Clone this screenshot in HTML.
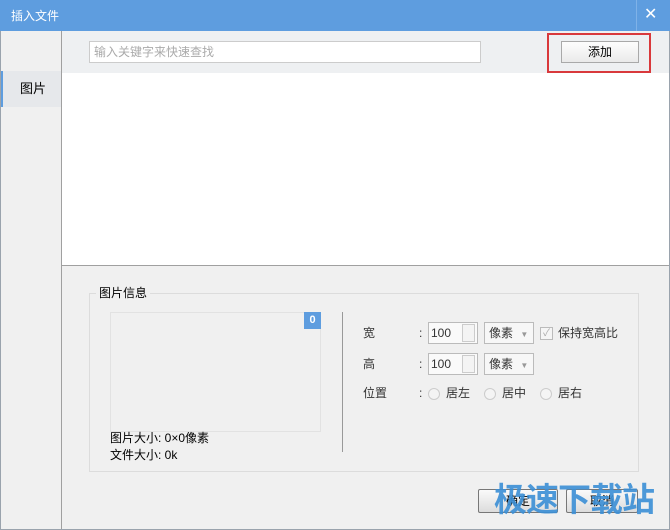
<!DOCTYPE html>
<html><head><meta charset="utf-8"><style>
*{margin:0;padding:0;box-sizing:border-box}
html,body{width:670px;height:530px;overflow:hidden}
body{background:#f0f0f0;font-family:"Liberation Sans","Noto Sans CJK SC","WenQuanYi Zen Hei",sans-serif;font-size:12px;line-height:14px;color:#333;position:relative}
.a{position:absolute;white-space:nowrap}
</style></head><body>
<div class="a" style="left:0;top:0;width:670px;height:31px;background:#5e9ddf"></div>
<div class="a" style="left:11px;top:9px;color:#fff;font-size:12px">插入文件</div>
<div class="a" style="left:636px;top:0;width:1px;height:31px;background:#7fb2e8"></div>
<div class="a" style="left:644px;top:7px;color:#fff;font-size:16px;line-height:16px">✕</div>
<div class="a" style="left:0;top:31px;width:670px;height:499px;border:1px solid #9aa3ad;border-top:0"></div>
<div class="a" style="left:1px;top:31px;width:60px;height:498px;background:#f0f0f0"></div>
<div class="a" style="left:61px;top:31px;width:1px;height:498px;background:#a0a0a0"></div>
<div class="a" style="left:1px;top:71px;width:60px;height:36px;background:#e6e8eb;border-left:2px solid #5e9ddf"></div>
<div class="a" style="left:20px;top:82px;font-size:13px;color:#000">图片</div>
<div class="a" style="left:62px;top:31px;width:607px;height:42px;background:#eef0f2"></div>
<div class="a" style="left:89px;top:41px;width:392px;height:22px;background:#fff;border:1px solid #ccc;color:#aaa;padding:3px 4px;font-size:12px">输入关键字来快速查找</div>
<div class="a" style="left:547px;top:33px;width:104px;height:40px;border:2px solid #d9393c"></div>
<div class="a" style="left:561px;top:41px;width:78px;height:22px;background:linear-gradient(#fdfdfd,#eaeaea);border:1px solid #a9a9a9;text-align:center;line-height:20px;color:#000">添加</div>
<div class="a" style="left:62px;top:73px;width:607px;height:193px;background:#fff;border-bottom:1px solid #a0a0a0"></div>
<div class="a" style="left:89px;top:293px;width:550px;height:179px;border:1px solid #dcdcdc"></div>
<div class="a" style="left:96px;top:286px;padding:0 3px;background:#f0f0f0;color:#000">图片信息</div>
<div class="a" style="left:110px;top:312px;width:211px;height:120px;border:1px solid #e2e2e2"></div>
<div class="a" style="left:304px;top:312px;width:17px;height:17px;background:#5e9ddf;color:#fff;font-weight:bold;text-align:center;line-height:17px;font-size:11px">0</div>
<div class="a" style="left:110px;top:431px;color:#000">图片大小: 0×0像素</div>
<div class="a" style="left:110px;top:448px;color:#000">文件大小: 0k</div>
<div class="a" style="left:342px;top:312px;width:1px;height:140px;background:#999"></div>
<div class="a" style="left:363px;top:326px">宽</div>
<div class="a" style="left:363px;top:357px">高</div>
<div class="a" style="left:363px;top:386px">位置</div>
<div class="a" style="left:419px;top:326px">:</div>
<div class="a" style="left:419px;top:357px">:</div>
<div class="a" style="left:419px;top:386px">:</div>
<div class="a" style="left:428px;top:322px;width:50px;height:22px;border:1px solid #bbb;background:#fafafa;padding:3px 2px">100</div>
<div class="a" style="left:462px;top:324px;width:13px;height:18px;border:1px solid #ccc;background:#f4f4f4"></div>
<div class="a" style="left:428px;top:353px;width:50px;height:22px;border:1px solid #bbb;background:#fafafa;padding:3px 2px">100</div>
<div class="a" style="left:462px;top:355px;width:13px;height:18px;border:1px solid #ccc;background:#f4f4f4"></div>
<div class="a" style="left:484px;top:322px;width:50px;height:22px;border:1px solid #bbb;background:#f7f7f7;padding:3px 4px">像素 <span style="color:#999;font-size:8px;margin-left:4px">▼</span></div>
<div class="a" style="left:484px;top:353px;width:50px;height:22px;border:1px solid #bbb;background:#f7f7f7;padding:3px 4px">像素 <span style="color:#999;font-size:8px;margin-left:4px">▼</span></div>
<div class="a" style="left:540px;top:327px;width:13px;height:13px;border:1px solid #bbb;background:#f5f5f5;color:#aaa;font-size:10px;line-height:11px;text-align:center">✓</div>
<div class="a" style="left:558px;top:326px">保持宽高比</div>
<div class="a" style="left:428px;top:388px;width:12px;height:12px;border-radius:50%;border:1px solid #ccc;background:#f4f4f4"></div>
<div class="a" style="left:446px;top:386px">居左</div>
<div class="a" style="left:484px;top:388px;width:12px;height:12px;border-radius:50%;border:1px solid #ccc;background:#f4f4f4"></div>
<div class="a" style="left:502px;top:386px">居中</div>
<div class="a" style="left:540px;top:388px;width:12px;height:12px;border-radius:50%;border:1px solid #ccc;background:#f4f4f4"></div>
<div class="a" style="left:558px;top:386px">居右</div>
<div class="a" style="left:478px;top:489px;width:80px;height:24px;border:1px solid #777;border-radius:2px;background:linear-gradient(#fafafa,#dcdcdc);text-align:center;line-height:22px;color:#000">确定</div>
<div class="a" style="left:566px;top:489px;width:72px;height:24px;border:1px solid #777;border-radius:2px;background:linear-gradient(#fafafa,#dcdcdc);text-align:center;line-height:22px;color:#000">取消</div>
<div class="a" style="left:494px;top:480px;font-size:33px;font-weight:bold;color:#3b8fd6;letter-spacing:-1px;opacity:.9;line-height:40px">极速下载站</div>
</body></html>
